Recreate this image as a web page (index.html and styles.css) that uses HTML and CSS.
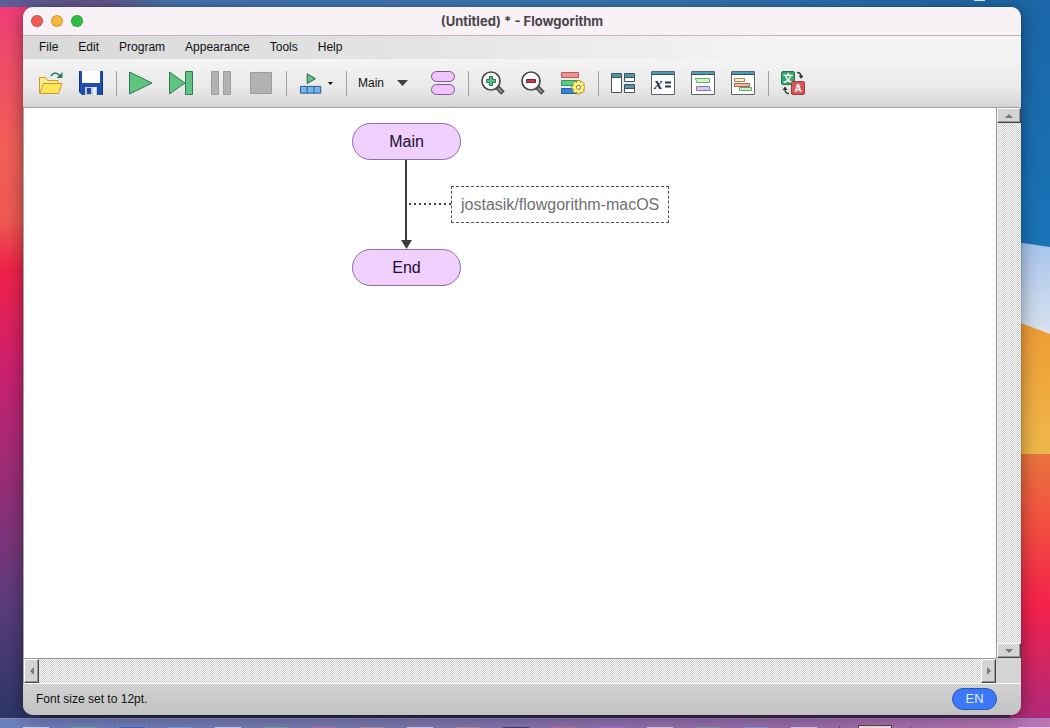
FILE: index.html
```html
<!DOCTYPE html>
<html lang="en">
<head>
    <meta charset="UTF-8">
    <meta name="viewport" content="width=device-width, initial-scale=1.0">
    <title>(Untitled) * - Flowgorithm</title>
    <link rel="stylesheet" href="styles.css">
</head>
<body>

<div class="system-bar"></div>

<div class="desktop">
    <svg class="wallpaper" viewBox="0 0 40 711" preserveAspectRatio="none">
        <defs>
            <linearGradient id="blue" x1="0" y1="0" x2="0" y2="1"><stop offset="0" stop-color="#1a66a8"/><stop offset="1" stop-color="#1a74b9"/></linearGradient>
            <linearGradient id="sky" x1="0" y1="0" x2="0" y2="1"><stop offset="0" stop-color="#a5c3ec"/><stop offset="1" stop-color="#dbe3ee"/></linearGradient>
            <linearGradient id="sun" x1="0" y1="0" x2="0" y2="1"><stop offset="0" stop-color="#ee9a35"/><stop offset="1" stop-color="#efb84a"/></linearGradient>
            <linearGradient id="red" x1="0" y1="0" x2="0" y2="1"><stop offset="0" stop-color="#e9743f"/><stop offset=".25" stop-color="#f2503f"/><stop offset=".58" stop-color="#f4214c"/><stop offset="1" stop-color="#ae2a78"/></linearGradient>
        </defs>
        <rect width="40" height="260" fill="url(#blue)"/>
        <path d="M0 234L40 240V330H0z" fill="url(#sky)"/>
        <path d="M0 312L40 327V450H0z" fill="url(#sun)"/>
        <rect y="447" width="40" height="264" fill="url(#red)"/>
    </svg>

    <div class="window">
        <div class="title-bar">
            <div class="lights">
                <button class="light close" aria-label="Close"></button>
                <button class="light minimize" aria-label="Minimize"></button>
                <button class="light maximize" aria-label="Zoom"></button>
            </div>
            <h1>(Untitled) * - Flowgorithm</h1>
        </div>

        <div class="menu-bar">
            <button>File</button>
            <button>Edit</button>
            <button>Program</button>
            <button>Appearance</button>
            <button>Tools</button>
            <button>Help</button>
        </div>

        <div class="toolbar">
            <button class="tool" aria-label="Open">
                <svg viewBox="0 0 24 24"><path d="M.5 22V6.5h6l2 3h10.500V13" fill="#fff08a" stroke="#d09a2c"/><path d="M4.500 12.500h18.500l-3.500 10H.8z" fill="#ffe45e" stroke="#d0952c"/><path d="M12 5q4-6 9 0" fill="none" stroke="#2d7d68" stroke-width="1.600"/><path d="M23.500 1v6h-6z" fill="#2d7d68"/></svg>
            </button>
            <button class="tool" aria-label="Save">
                <svg viewBox="0 0 24 24"><path d="M0 0h24v24H3l-3-3z" fill="#1d4fae"/><path d="M3 0h18v12H3z" fill="#fff"/><path d="M.5 0v21M23.500 0v24" stroke="#123478"/><path d="M6 16h12v8H6z" fill="#c4cad4"/><path d="M8 17h4v6H8z" fill="#1d489b"/><path d="M14 16h3v8h-3z" fill="#e8eaee"/></svg>
            </button>
            <span class="separator"></span>
            <button class="tool" aria-label="Run">
                <svg viewBox="0 0 24 24"><path d="M.5 1L23 12 .5 23z" fill="#5fc47f" stroke="#2f7a52"/></svg>
            </button>
            <button class="tool" aria-label="Step">
                <svg viewBox="0 0 24 24"><path d="M.5 1L16 12 .5 23z" fill="#5fc47f" stroke="#2f7a52"/><path d="M16.500.5h7v23h-7z" fill="#5fc47f" stroke="#2f7a52"/></svg>
            </button>
            <button class="tool" aria-label="Pause">
                <svg viewBox="0 0 24 24"><path d="M2.500.5h7v23h-7zM14.500.5h7v23h-7z" fill="#b2b2b2" stroke="#9c9c9c"/></svg>
            </button>
            <button class="tool" aria-label="Stop">
                <svg viewBox="0 0 24 24"><path d="M1.500 1.500h21v21h-21z" fill="#b2b2b2" stroke="#9c9c9c"/></svg>
            </button>
            <span class="separator"></span>
            <button class="tool speed" aria-label="Speed">
                <svg viewBox="0 0 24 24"><path d="M8.500 2.500L17 7.500l-8.500 5z" fill="#5fc47f" stroke="#2b5947"/><path d="M1.500 15.500h21v7h-21zM8.500 15.500v7M15.500 15.500v7" fill="#75b4ee" stroke="#2b5488"/></svg>
                <svg class="drop" viewBox="0 0 5 3"><path d="M0 0h5L2.500 3z"/></svg>
            </button>
            <span class="separator"></span>
            <div class="function-picker">
                <select aria-label="Function">
                    <option>Main</option>
                </select>
                <svg viewBox="0 0 11 6"><path d="M0 0h11L5.500 6z" fill="#404040"/></svg>
            </div>
            <button class="tool" aria-label="Edit functions">
                <svg viewBox="0 0 24 24"><rect x=".5" y=".5" width="23" height="10" rx="5" fill="#efc3fb" stroke="#80568e"/><rect x=".5" y="13.500" width="23" height="10" rx="5" fill="#efc3fb" stroke="#80568e"/></svg>
            </button>
            <span class="separator"></span>
            <button class="tool" aria-label="Zoom in">
                <svg viewBox="0 0 24 24"><path d="M16 16l6 6" stroke="#484848" stroke-width="5"/><path d="M17 17l4 4" stroke="#858585" stroke-width="2.500"/><circle cx="10" cy="10" r="9" fill="#fff" stroke="#484848" stroke-width="1.700"/><path d="M8.500 5.500h3v3h3v3h-3v3h-3v-3h-3v-3h3z" fill="#5ac080" stroke="#287650"/></svg>
            </button>
            <button class="tool" aria-label="Zoom out">
                <svg viewBox="0 0 24 24"><path d="M16 16l6 6" stroke="#484848" stroke-width="5"/><path d="M17 17l4 4" stroke="#858585" stroke-width="2.500"/><circle cx="10" cy="10" r="9" fill="#fff" stroke="#484848" stroke-width="1.700"/><path d="M5.500 8.500h9v3h-9z" fill="#c9394a" stroke="#6c2732"/></svg>
            </button>
            <button class="tool" aria-label="Layout style">
                <svg viewBox="0 0 24 24"><path d="M.5 1.500h17v5H.5z" fill="#f29390" stroke="#b8605f"/><path d="M.5 9.500h17v5H.5z" fill="#5ccc83" stroke="#359460"/><path d="M.5 17.500h17v5H.5z" fill="#3783d5" stroke="#255d9e"/><path d="M16 9.500h3l.5 2 1.800-1 2 2-1 1.800 1.500.5v3l-1.500.5 1 1.800-2 2-1.800-1-.5 1.900h-3l-.5-1.900-1.800 1-2-2 1-1.800-1.900-.5v-3l1.900-.5-1-1.800 2-2 1.800 1z" fill="#fff17a" stroke="#9a852c" stroke-width=".8"/><circle cx="17.500" cy="16.300" r="2" fill="#fff" stroke="#8a7625"/></svg>
            </button>
            <span class="separator"></span>
            <button class="tool" aria-label="Arrange windows">
                <svg viewBox="0 0 24 24"><path d="M.5 2.500h10v19H.5zM13.500 2.500h10v8h-10zM13.500 13.500h10v8h-10z" fill="#fff" stroke="#46515b"/><path d="M1 3h9v3H1zM14 3h9v3h-9zM14 14h9v3h-9z" fill="#5493a8"/><path d="M0 6.500h11M13 6.500h11M13 17.500h11" stroke="#46515b"/></svg>
            </button>
            <button class="tool" aria-label="Variable watch">
                <svg viewBox="0 0 24 24"><path d="M.5.500h23v23H.5z" fill="#fff" stroke="#5a646d"/><path d="M1 1h22v2H1z" fill="#4f9db0"/><path d="M0 3.500h24" stroke="#2a5268"/><text x="3" y="18" class="glyph-x">x</text><path d="M14 11.500h6M14 15.500h6" stroke="#25364d" stroke-width="2"/></svg>
            </button>
            <button class="tool" aria-label="Console">
                <svg viewBox="0 0 24 24"><path d="M.5.500h23v23H.5z" fill="#fff" stroke="#5a646d"/><path d="M1 1h22v2H1z" fill="#4f9db0"/><path d="M0 3.500h24" stroke="#2a5268"/><path d="M4 7.500h14.500v4h-13V9.500z" fill="#d0f5ce" stroke="#72a972"/><path d="M5.500 15.500h13v2l1.500 2H5.500z" fill="#d5c9f5" stroke="#8377aa"/></svg>
            </button>
            <button class="tool" aria-label="Source code viewer">
                <svg viewBox="0 0 24 24"><path d="M.5.500h23v23H.5z" fill="#fff" stroke="#5a646d"/><path d="M1 1h22v2H1z" fill="#4f9db0"/><path d="M0 3.500h24" stroke="#2a5268"/><path d="M3.500 7.500h10v3h-10z" fill="#fff1d4" stroke="#b8814c"/><path d="M3.500 12.500h15v3h-15z" fill="#f6b5a8" stroke="#ae6255"/><path d="M8.500 16.500h12v3h-12z" fill="#c8efc4" stroke="#66a36c"/></svg>
            </button>
            <span class="separator"></span>
            <button class="tool" aria-label="Language">
                <svg viewBox="0 0 24 24"><rect x=".5" y=".5" width="13" height="13" rx="1.500" fill="#35a66b" stroke="#247550"/><text x="7" y="11" class="glyph-cjk">文</text><rect x="10.500" y="10.500" width="13" height="13" rx="1.500" fill="#d95757" stroke="#9c3f43"/><text x="17" y="21" class="glyph-a">A</text><path d="M16 1.500q4 0 4 4M8 22.500q-4 0-4-4" fill="none" stroke="#333" stroke-width="1.300"/><path d="M17.500 4.500h5L20 8zM1.500 19h5L4 15.500z" fill="#333"/></svg>
            </button>
        </div>

        <div class="workspace">
            <div class="canvas">
                <svg class="connectors" width="120" height="90" viewBox="0 0 120 90">
                    <path d="M54 0v84" stroke="#3c3c3c" stroke-width="2"/>
                    <path d="M49 80h11l-5.500 9z" fill="#3c3c3c"/>
                    <path d="M57 44h42" stroke="#444" stroke-width="2" stroke-dasharray="2 3"/>
                </svg>
                <div class="node start">Main</div>
                <div class="node comment">jostasik/flowgorithm-macOS</div>
                <div class="node end">End</div>
            </div>
            <div class="scrollbar vertical">
                <button aria-label="Scroll up"><svg viewBox="0 0 8 4"><path d="M0 4h8L4 0z"/></svg></button>
                <div class="track"></div>
                <button aria-label="Scroll down"><svg viewBox="0 0 8 4"><path d="M0 0h8L4 4z"/></svg></button>
            </div>
            <div class="scrollbar horizontal">
                <button aria-label="Scroll left"><svg viewBox="0 0 4 8"><path d="M4 0v8L0 4z"/></svg></button>
                <div class="track"></div>
                <button aria-label="Scroll right"><svg viewBox="0 0 4 8"><path d="M0 0v8l4-4z"/></svg></button>
            </div>
            <div class="corner"></div>
        </div>

        <div class="status-bar">
            <span>Font size set to 12pt.</span>
            <button class="language">EN</button>
        </div>
    </div>
</div>

<div class="dock">
    <i class="app white"></i>
    <i class="app green"></i>
    <i class="app blue"></i>
    <i class="app light-blue"></i>
    <i class="app white"></i>
    <i class="app green"></i>
    <i class="app red"></i>
    <i class="app tan"></i>
    <i class="app white"></i>
    <i class="app tan"></i>
    <i class="app dark"></i>
    <i class="app red"></i>
    <i class="app purple"></i>
    <i class="app white"></i>
    <i class="app green"></i>
    <i class="app light-blue"></i>
    <i class="app white"></i>
    <i class="divider"></i>
    <i class="preview"></i>
    <i class="divider"></i>
    <i class="app trash"></i>
</div>

</body>
</html>
```

FILE: styles.css
```css
* {
    box-sizing: border-box;
}
body {
    margin: 0;
    height: 100vh;
    display: flex;
    flex-direction: column;
    overflow: hidden;
    font-family: "Liberation Sans", Arial, sans-serif;
    font-size: 12px;
    color: #111;
}
h1 {
    margin: 0;
}
button, select {
    margin: 0;
    padding: 0;
    border: none;
    background: none;
    font: inherit;
    color: inherit;
}
svg {
    display: block;
}

/* desktop */
.system-bar {
    height: 7px;
    background: linear-gradient(#e8eef4, #e8eef4) calc(100% - 65px) 0 / 11px 1px no-repeat,
        linear-gradient(to right, #5d5f98, #67568c 10%, #4676b2 16%, #3a78b5 60%, #1b66a8);
}
.desktop {
    position: relative;
    flex: 1;
    min-height: 0;
    display: flex;
    padding: 0 29px 3px 23px;
    background: linear-gradient(to bottom, #f03c78, #ee4e66 8%, #f05f58 20%, #ee5a50 30%, #f0224a 37%, #cc2070 51%, #8d3078 70%, #5a3c7c 84%, #2c3668) left / 40px 100% no-repeat,
        linear-gradient(to right, #26284e, #30284e 50%, #5a2858);
}
.wallpaper {
    position: absolute;
    right: 0;
    top: 0;
    width: 40px;
    height: 100%;
}
.window {
    position: relative;
    flex: 1;
    min-width: 0;
    display: flex;
    flex-direction: column;
    border-radius: 10px;
    overflow: hidden;
    background: #d4d4d4;
    box-shadow: 0 0 1px rgba(0, 0, 0, 0.6), 0 2px 18px rgba(0, 0, 0, 0.4);
}

/* title and menus */
.title-bar {
    display: grid;
    grid-template-columns: 1fr auto 1fr;
    align-items: center;
    height: 29px;
    padding: 0 8px;
    background: #f8f1f5;
    border-bottom: 1px solid #bdb9bb;
}
.title-bar h1 {
    font: bold 13px/16px Inter, sans-serif;
    color: #49444a;
}
.lights {
    display: flex;
    gap: 8px;
}
.light {
    width: 12px;
    height: 12px;
    border-radius: 50%;
    border: 1px solid rgba(0, 0, 0, 0.15);
}
.close {
    background: #ee5c54;
}
.minimize {
    background: #f6b73c;
}
.maximize {
    background: #2fc043;
}
.menu-bar {
    display: flex;
    height: 23px;
    padding: 0 6px 2px;
    background: linear-gradient(to right, #d9d9d9, #e2e2e2 35%, #f4f4f4 75%);
}
.menu-bar button {
    padding: 0 10px;
}

/* toolbar */
.toolbar {
    display: flex;
    align-items: center;
    height: 49px;
    padding: 0 8px;
    border-bottom: 1px solid #a0a0a0;
    background: linear-gradient(to bottom, #f4f4f4, #e9e9e9 60%, #d4d4d4);
}
.tool {
    width: 40px;
    padding: 0 8px;
}
.tool svg {
    width: 24px;
    height: 24px;
}
.speed {
    display: flex;
    align-items: center;
    gap: 6px;
    width: 50px;
}
.speed .drop {
    width: 5px;
    height: 3px;
}
.separator {
    width: 1px;
    height: 25px;
    margin: 0 4px 0 5px;
    background: #a0a0a0;
}
.function-picker {
    position: relative;
    width: 72px;
}
.function-picker select {
    appearance: none;
    width: 100%;
    height: 24px;
    padding: 0 7px;
}
.function-picker svg {
    position: absolute;
    right: 15px;
    top: 9px;
    width: 11px;
    height: 6px;
    pointer-events: none;
}
.glyph-x {
    font: italic bold 17px "Liberation Serif", serif;
    fill: #25364d;
}
.glyph-cjk, .glyph-a {
    font: bold 10px "Liberation Sans", "Noto Sans CJK SC", sans-serif;
    fill: #fff;
    text-anchor: middle;
}

/* drawing area */
.workspace {
    flex: 1;
    min-height: 0;
    display: grid;
    grid-template-columns: 1fr 25px;
    grid-template-rows: 1fr 26px;
    border-left: 1px solid #a8a8a8;
}
.canvas {
    position: relative;
    background: #fff;
}
.node {
    position: absolute;
    height: 37px;
    font-size: 16px;
    line-height: 35px;
    text-align: center;
    white-space: nowrap;
}
.start, .end {
    left: 328px;
    width: 109px;
    border: 1px solid #8e6e9c;
    border-radius: 19px;
    background: #f0d0ff;
    color: #20102c;
}
.start {
    top: 15px;
}
.end {
    top: 141px;
}
.comment {
    left: 427px;
    top: 78px;
    padding: 0 9px;
    border: 1px dashed #555;
    color: #707070;
}
.connectors {
    position: absolute;
    left: 328px;
    top: 52px;
}

/* scrollbars */
.scrollbar {
    display: flex;
}
.vertical {
    flex-direction: column;
    border-left: 1px solid #999;
}
.horizontal {
    border-top: 1px solid #999;
    border-bottom: 1px solid #fff;
}
.track {
    flex: 1;
    background: repeating-conic-gradient(#cbcbcb 0 25%, #fff 0 50%) 0 0 / 2px 2px;
}
.scrollbar button {
    display: flex;
    align-items: center;
    justify-content: center;
    background: #d4d4d4;
    border: 1px solid;
    border-color: #fff #444 #444 #fff;
    box-shadow: inset -1px -1px #999;
}
.scrollbar button svg {
    fill: #777;
}
.vertical button {
    height: 15px;
}
.vertical svg {
    width: 8px;
    height: 4px;
}
.horizontal button {
    width: 15px;
}
.horizontal svg {
    width: 4px;
    height: 8px;
}
.corner {
    background: #d4d4d4;
    border-bottom: 1px solid #fff;
}

/* status */
.status-bar {
    display: flex;
    align-items: center;
    justify-content: space-between;
    height: 31px;
    padding: 0 24px 2px 13px;
    background: linear-gradient(to bottom, #d2d2d2, #c2c2c2);
}
.language {
    width: 45px;
    height: 22px;
    border: 1px solid #2858b4;
    border-radius: 11px;
    background: #3b78f7;
    font-size: 13px;
    color: #e4eeff;
}

/* dock */
.dock {
    display: flex;
    align-items: flex-end;
    gap: 22px;
    height: 10px;
    padding-left: 23px;
    border-top: 1px solid #958bb8;
    background: linear-gradient(to right, #6a80bc, #7878b0 35%, #9070ae 60%, #a06cac 80%, #bd73b6);
}
.app {
    flex: none;
    width: 26px;
    height: 1px;
    background: #c8d0e8;
}
.white {
    background: #d4cde4;
}
.green {
    background: #69a794;
}
.blue {
    background: #3c62cc;
}
.light-blue {
    background: #6c9fdc;
}
.red {
    background: #c46a91;
}
.tan {
    background: #ab8d98;
}
.dark {
    background: #443d66;
}
.purple {
    background: #b468d2;
}
.divider {
    width: 1px;
    height: 2px;
    background: #5f4878;
}
.preview {
    width: 34px;
    height: 3px;
    margin: 0 -4px;
    border: 1px solid #5c3f40;
    border-bottom: none;
    background: #eee8e0;
}
.trash {
    width: 32px;
    margin-left: auto;
    background: #e6d0e8;
}
```
